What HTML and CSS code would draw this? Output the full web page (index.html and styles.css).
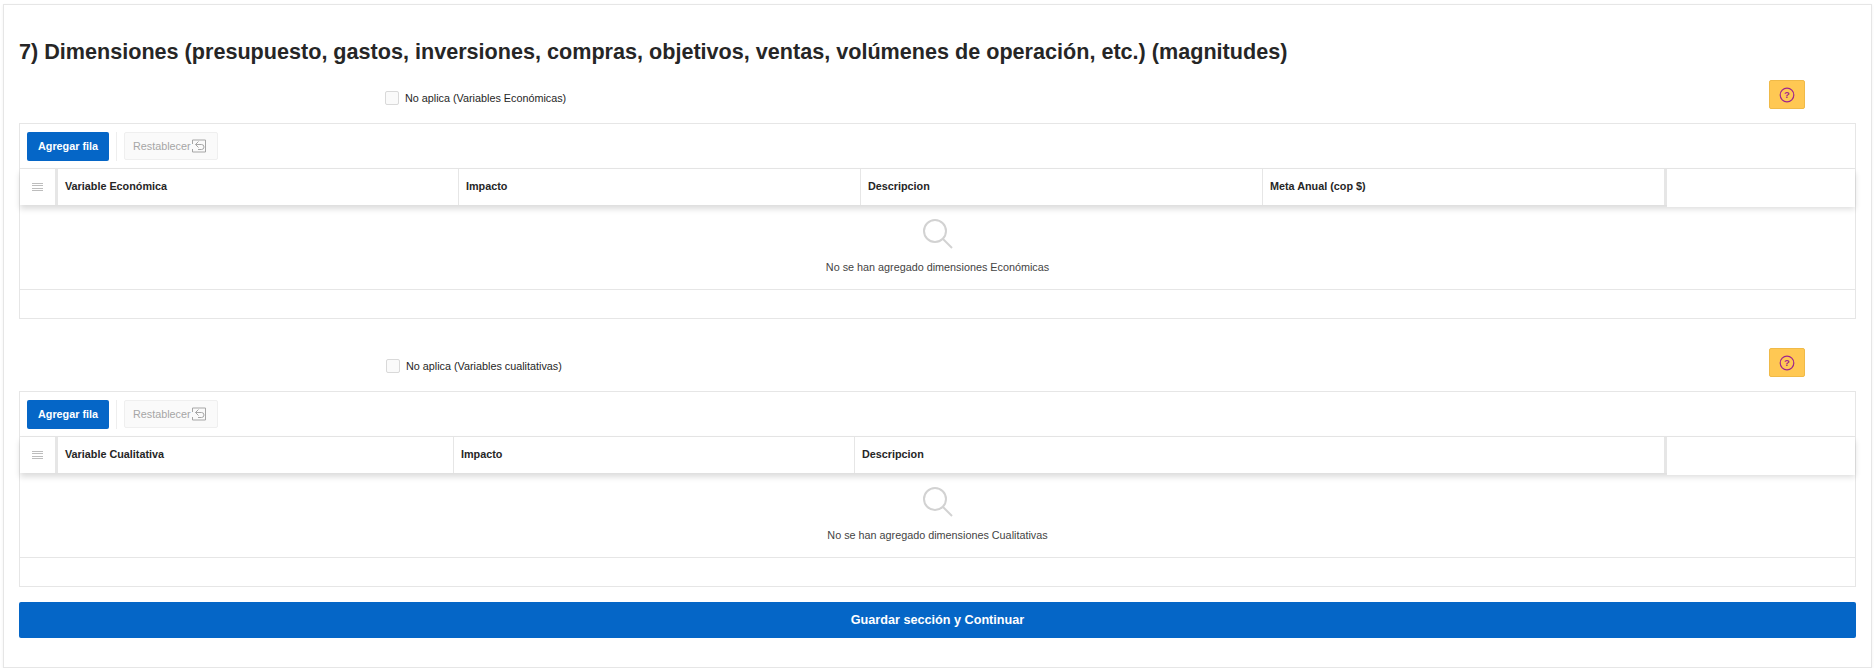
FILE: index.html
```html
<!DOCTYPE html>
<html lang="es">
<head>
  <meta charset="UTF-8">
  <title>Dimensiones</title>
  <meta name="viewport" content="width=device-width, initial-scale=1.0">
  <link rel="stylesheet" href="styles.css">
</head>
<body>

  <div class="card">
    <h2 class="section-title">7) Dimensiones (presupuesto, gastos, inversiones, compras, objetivos, ventas, volúmenes de operación, etc.) (magnitudes)</h2>

    <div class="check-row">
      <label class="check-label"><span class="check-box"></span>No aplica (Variables Económicas)</label>
      <button class="btn-help" aria-label="Ayuda">
        <svg viewBox="0 0 16 16" width="16" height="16"><circle cx="8" cy="8" r="6.8"/><text x="8" y="11.2" text-anchor="middle">?</text></svg>
      </button>
    </div>

    <div class="grid-region">
      <div class="grid-toolbar">
        <button class="btn-primary">Agregar fila</button>
        <span class="toolbar-sep"></span>
        <button class="btn-reset">Restablecer<svg viewBox="0 0 16 16" width="16" height="16"><path d="M1.500 6V2H14.500V14H1.500V11M7.500 3.500L4.500 6.500L7.500 9.500M4.500 6.500H10.500A2.500 2.500 0 0 1 10.500 11.500H7"/></svg></button>
      </div>
      <div class="grid-head">
        <div class="head-handle"><span class="lines"></span></div>
        <div class="head-cols cols-eco">
          <div class="head-cell">Variable Económica</div>
          <div class="head-cell">Impacto</div>
          <div class="head-cell">Descripcion</div>
          <div class="head-cell">Meta Anual (cop $)</div>
        </div>
        <div class="head-end"></div>
      </div>
      <div class="grid-empty">
        <svg class="empty-icon" viewBox="0 0 32 32" width="32" height="32"><circle cx="13" cy="13" r="11"/><path d="M21 21L30 30"/></svg>
        <p>No se han agregado dimensiones Económicas</p>
      </div>
      <div class="grid-foot"></div>
    </div>

    <div class="check-row second">
      <label class="check-label shifted"><span class="check-box"></span>No aplica (Variables cualitativas)</label>
      <button class="btn-help" aria-label="Ayuda">
        <svg viewBox="0 0 16 16" width="16" height="16"><circle cx="8" cy="8" r="6.8"/><text x="8" y="11.2" text-anchor="middle">?</text></svg>
      </button>
    </div>

    <div class="grid-region">
      <div class="grid-toolbar">
        <button class="btn-primary">Agregar fila</button>
        <span class="toolbar-sep"></span>
        <button class="btn-reset">Restablecer<svg viewBox="0 0 16 16" width="16" height="16"><path d="M1.500 6V2H14.500V14H1.500V11M7.500 3.500L4.500 6.500L7.500 9.500M4.500 6.500H10.500A2.500 2.500 0 0 1 10.500 11.500H7"/></svg></button>
      </div>
      <div class="grid-head">
        <div class="head-handle"><span class="lines"></span></div>
        <div class="head-cols cols-qual">
          <div class="head-cell">Variable Cualitativa</div>
          <div class="head-cell">Impacto</div>
          <div class="head-cell">Descripcion</div>
        </div>
        <div class="head-end"></div>
      </div>
      <div class="grid-empty">
        <svg class="empty-icon" viewBox="0 0 32 32" width="32" height="32"><circle cx="13" cy="13" r="11"/><path d="M21 21L30 30"/></svg>
        <p>No se han agregado dimensiones Cualitativas</p>
      </div>
      <div class="grid-foot"></div>
    </div>

    <button class="btn-save">Guardar sección y Continuar</button>
  </div>

</body>
</html>
```

FILE: styles.css
```css
body {
  margin: 0;
  font-family: "Liberation Sans", Arial, sans-serif;
  background-color: #fff;
  color: #262626;
}

.card {
  margin: 4px 4px 0 3px;
  height: 664px;
  box-sizing: border-box;
  padding: 33px 15px 0 15px;
  border: 1px solid #e6e6e6;
  box-shadow: 0 1px 3px rgba(0,0,0,0.06);
}

.section-title {
  margin: 0;
  font-size: 21.600px;
  line-height: 28px;
  font-weight: bold;
}

.check-row {
  display: flex;
  align-items: center;
  justify-content: space-between;
  height: 29px;
  margin-top: 14px;
  padding-right: 51px;
}

.check-row.second {
  margin-top: 29px;
}

.check-label {
  display: flex;
  align-items: center;
  margin-top: 7px;
  margin-left: 366px;
  font-size: 10.800px;
}

.check-label.shifted {
  margin-left: 367px;
}

.check-box {
  width: 12px;
  height: 12px;
  margin-right: 6px;
  border: 1px solid #d9d9d9;
  border-radius: 2px;
  background: #fafafa;
}

.btn-help {
  width: 36px;
  height: 29px;
  padding: 0;
  display: flex;
  align-items: center;
  justify-content: center;
  background: #ffc853;
  border: 1px solid #f0ba48;
  border-radius: 2px;
}

.btn-help circle {
  fill: none;
  stroke: #a0268c;
  stroke-width: 1.200;
}

.btn-help text {
  font-size: 9.500px;
  font-weight: bold;
  fill: #a0268c;
}

.grid-region {
  margin-top: 14px;
  height: 196px;
  box-sizing: border-box;
  border: 1px solid #e6e6e6;
  display: flex;
  flex-direction: column;
}

.grid-toolbar {
  display: flex;
  align-items: center;
  height: 45px;
  flex: none;
  box-sizing: border-box;
  padding: 0 7px;
  border-bottom: 1px solid #e6e6e6;
}

.btn-primary {
  width: 82px;
  height: 29px;
  padding: 0;
  background: #0566c7;
  color: #fff;
  border: none;
  border-radius: 2px;
  font-family: inherit;
  font-size: 10.800px;
  font-weight: bold;
}

.toolbar-sep {
  width: 1px;
  height: 29px;
  margin: 0 7px;
  background: #eee;
}

.btn-reset {
  width: 94px;
  height: 28px;
  padding: 0 0 0 8px;
  display: flex;
  align-items: center;
  background: #fafafa;
  color: #a6a6a6;
  border: 1px solid #efefef;
  border-radius: 2px;
  font-family: inherit;
  font-size: 10.800px;
}

.btn-reset svg {
  fill: none;
  stroke: #a6a6a6;
  stroke-width: 1;
}

.grid-head {
  display: flex;
  flex: none;
  height: 36px;
  background: #fff;
  box-shadow: 0 4px 6px rgba(0,0,0,0.14);
  position: relative;
}

.head-handle {
  width: 35px;
  flex: none;
  display: flex;
  align-items: center;
  justify-content: center;
  border-right: 3px solid #e6e6e6;
}

.lines {
  width: 11px;
  height: 8px;
  background: repeating-linear-gradient(#bdbdbd 0, #bdbdbd 1px, transparent 1px, transparent 2.340px);
}

.head-cols {
  display: grid;
  width: 1606px;
  flex: none;
  border-right: 3px solid #e6e6e6;
}

.cols-eco {
  grid-template-columns: 401px 402px 402px 1fr;
}

.cols-qual {
  grid-template-columns: 396px 401px 1fr;
}

.head-cell {
  display: flex;
  align-items: center;
  padding: 0 0 2px 7px;
  border-right: 1px solid #e6e6e6;
  font-size: 10.800px;
  font-weight: bold;
}

.head-cell:last-child {
  border-right: none;
}

.head-end {
  flex: 1;
  height: 38px;
  background: #fff;
}

.grid-empty {
  flex: 1;
  display: flex;
  flex-direction: column;
  align-items: center;
  border-bottom: 1px solid #e6e6e6;
}

.empty-icon {
  margin-top: 13px;
  fill: none;
  stroke: #d2d2d2;
  stroke-width: 2;
}

.grid-empty p {
  margin: 11px 0 0;
  font-size: 10.800px;
  color: #444;
}

.grid-foot {
  flex: none;
  height: 28px;
}

.btn-save {
  display: block;
  width: 100%;
  height: 36px;
  margin-top: 15px;
  padding: 0;
  background: #0566c7;
  color: #fff;
  border: none;
  border-radius: 2px;
  font-family: inherit;
  font-size: 12.650px;
  font-weight: bold;
}
```
